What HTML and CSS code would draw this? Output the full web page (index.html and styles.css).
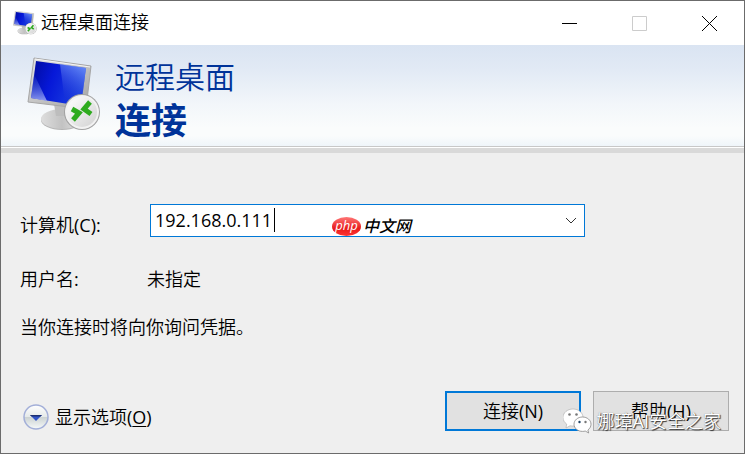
FILE: index.html
```html
<!DOCTYPE html>
<html lang="zh-CN">

<head>
  <meta charset="UTF-8">
  <meta name="viewport" content="width=device-width, initial-scale=1">
  <title>远程桌面连接</title>
  <link rel="stylesheet" href="styles.css">
</head>

<body>

  <svg width="0" height="0" class="defs" aria-hidden="true">
    <defs>
      <linearGradient id="frame" x1="0" y1="0" x2="1" y2="1">
        <stop offset="0" stop-color="#e4e4e4" />
        <stop offset="0.5" stop-color="#c4c4c4" />
        <stop offset="1" stop-color="#a0a0a0" />
      </linearGradient>
      <linearGradient id="screen" x1="0" y1="0" x2="1" y2="0.3">
        <stop offset="0" stop-color="#000a9c" />
        <stop offset="0.45" stop-color="#0618d8" />
        <stop offset="1" stop-color="#1a3fe0" />
      </linearGradient>
      <linearGradient id="shine" x1="0.6" y1="0" x2="0.3" y2="1">
        <stop offset="0" stop-color="#7fa4ff" stop-opacity="0.7" />
        <stop offset="1" stop-color="#0a1cc8" stop-opacity="0.1" />
      </linearGradient>
      <linearGradient id="glare" x1="0" y1="0" x2="0" y2="1">
        <stop offset="0" stop-color="#2a48d8" stop-opacity="0.2" />
        <stop offset="1" stop-color="#a4b0f4" stop-opacity="0.85" />
      </linearGradient>
      <linearGradient id="stand" x1="0" y1="0" x2="1" y2="0">
        <stop offset="0" stop-color="#dedede" />
        <stop offset="0.5" stop-color="#c2c2c2" />
        <stop offset="1" stop-color="#e6e6e6" />
      </linearGradient>
      <linearGradient id="badge" x1="0" y1="0" x2="1" y2="1">
        <stop offset="0" stop-color="#ffffff" />
        <stop offset="1" stop-color="#d2d2d2" />
      </linearGradient>
      <symbol id="remote" viewBox="0 0 74 74">
        <ellipse cx="35" cy="62" rx="21" ry="10" fill="#b4b4b4" />
        <ellipse cx="35" cy="61" rx="21" ry="10" fill="url(#stand)" />
        <path d="M27 46h17l-3 12H29z" fill="#bdbdbd" />
        <path d="M7 0L64 8L59 51L1 44z" fill="url(#frame)" stroke="#a6a6a6" stroke-width="1" />
        <path d="M8 1L63 9" stroke="#f4f4f4" stroke-width="1" />
        <path d="M9 3L59 10L54 48L4 40z" fill="url(#screen)" />
        <path d="M33 6L59 10L54 48L38 45z" fill="url(#shine)" />
        <path d="M7 16L20 43L4 40z" fill="url(#glare)" />
        <circle cx="55" cy="54" r="18" fill="#a2a2a2" />
        <circle cx="55" cy="54" r="17" fill="#f2f2f2" />
        <circle cx="55" cy="54" r="15" fill="url(#badge)" />
        <path d="M45 51L52 55L46 62" fill="none" stroke="#2eab1e" stroke-width="5" />
        <path d="M63 44L57 51L64 56" fill="none" stroke="#2eab1e" stroke-width="5" />
      </symbol>
    </defs>
  </svg>

  <div class="window">
    <header class="titlebar">
      <svg class="app-icon" aria-hidden="true"><use href="#remote" /></svg>
      <span class="title">远程桌面连接</span>
      <button type="button" class="caption" aria-label="最小化">
        <svg width="15" height="15" viewBox="0 0 15 15"><path d="M0 7.5h15" stroke="#000" /></svg>
      </button>
      <button type="button" class="caption" aria-label="最大化" disabled>
        <svg width="15" height="15" viewBox="0 0 15 15"><path d="M.5 .5h14v14h-14z" fill="none" stroke="#ccc" /></svg>
      </button>
      <button type="button" class="caption" aria-label="关闭">
        <svg width="15" height="15" viewBox="0 0 15 15"><path d="M0 0l15 15M15 0L0 15" stroke="#000" /></svg>
      </button>
    </header>

    <div class="banner">
      <svg class="banner-icon" aria-hidden="true"><use href="#remote" /></svg>
      <h1 class="product">远程桌面 <strong>连接</strong></h1>
    </div>

    <form class="content">
      <div class="fields">
        <label for="computer" class="computer-label">计算机<span class="key">(C):</span></label>
        <div class="combo">
          <input type="text" id="computer" name="computer" value="192.168.0.111" autocomplete="off">
          <span class="caret"></span>
          <button type="button" class="arrow" aria-label="选择计算机">
            <svg width="12" height="8" viewBox="0 0 12 8"><path d="M1 1l5 5 5-5" fill="none" stroke="#333" /></svg>
          </button>
          <div class="php-mark">
            <span class="php-oval">php</span>
            <span class="php-name">中文网</span>
          </div>
        </div>
        <span>用户名<span class="key">:</span></span>
        <span class="user">未指定</span>
      </div>

      <p class="hint">当你连接时将向你询问凭据。</p>

      <div class="actions">
        <button type="button" class="options">
          <svg width="26" height="26" viewBox="0 0 26 26" aria-hidden="true">
            <defs>
              <linearGradient id="round" x1="0" y1="0" x2="0" y2="1">
                <stop offset="0" stop-color="#ffffff" />
                <stop offset="0.48" stop-color="#e6eaea" />
                <stop offset="0.52" stop-color="#cdd3d3" />
                <stop offset="1" stop-color="#f6fafa" />
              </linearGradient>
            </defs>
            <circle cx="13" cy="13" r="12" fill="url(#round)" stroke="#a3afd8" stroke-width="1.5" />
            <path d="M7 11h12l-6 6z" fill="#3154c8" />
            <path d="M7 11h12l-1.500 1.500h-9z" fill="#1c2f70" />
          </svg>
          <span>显示选项<span class="key">(<u>O</u>)</span></span>
        </button>
        <button type="submit" class="btn primary">连接<span class="key">(N)</span></button>
        <button type="button" class="btn">帮助<span class="key">(H)</span></button>
      </div>
    </form>

    <div class="watermark">
      <svg width="30" height="26" viewBox="0 0 30 26" aria-hidden="true">
        <path d="M10 1C4.500 1 0 4.700 0 9.500c0 2.700 1.400 5 3.700 6.600L3 20l4-2.200c1 .2 2 .3 3 .3 5.500 0 10-3.800 10-8.600S15.500 1 10 1z" fill="#fff" stroke="#aaa" stroke-width=".6" />
        <path d="M19.500 9C14.800 9 11 12.200 11 16.200s3.800 7.200 8.500 7.200c1 0 1.900-.1 2.700-.4l3.500 2-.8-3c1.900-1.400 3.100-3.400 3.100-5.800 0-4-3.800-7.200-8.500-7.200z" fill="#fff" stroke="#888" stroke-width=".8" />
        <circle cx="6.500" cy="6.500" r="1.300" fill="#777" />
        <circle cx="13.500" cy="6.500" r="1.300" fill="#777" />
        <circle cx="16.500" cy="14" r="1.200" fill="#246" />
        <circle cx="22.500" cy="14" r="1.200" fill="#777" />
      </svg>
      <span>娜璋<span class="key">AI</span>安全之家</span>
    </div>
  </div>

</body>

</html>
```
FILE: styles.css
```css
* {
  box-sizing: border-box;
}

body {
  margin: 0;
  font-family: "Open Sans", "Noto Sans CJK SC", sans-serif;
  font-size: 18px;
  font-weight: 350;
  line-height: 24px;
  color: #000;
}

button,
input {
  font: inherit;
  color: inherit;
}

/* latin text next to the lighter chinese weight */
.key {
  font-weight: 400;
}

.defs {
  position: absolute;
}

.window {
  position: relative;
  display: flex;
  flex-direction: column;
  min-height: 100vh;
  background: #efefef;
  border: 1px solid #6b6b6b;
}

.titlebar {
  display: flex;
  align-items: center;
  height: 44px;
  padding-left: 12px;
  background: #fff;
}

.app-icon {
  width: 24px;
  height: 24px;
  margin-right: 4px;
}

.title {
  flex: 1;
  padding-bottom: 2px;
}

.caption {
  display: flex;
  align-items: center;
  justify-content: center;
  width: 70px;
  height: 44px;
  padding: 0;
  border: none;
  background: none;
}

.banner {
  display: flex;
  align-items: center;
  gap: 14px;
  height: 108px;
  padding: 0 26px 8px;
  background: linear-gradient(#dae4f2, #e2eaf5 25%, #f2f6fa 58%, #fafcfc 82%, #fafcfc 90%, #eff5fa) no-repeat;
  background-size: 100% 101px;
  box-shadow: inset 0 -5px #d9d9d9, inset 0 -6px #fff, inset 0 -7px #c8c8c8;
}

.banner-icon {
  width: 74px;
  height: 76px;
}

.product {
  margin: 0;
  padding-top: 8px;
  font-size: 30px;
  line-height: 44px;
  font-weight: 350;
  color: #039;
}

.product strong {
  display: block;
  font-size: 36px;
}

.content {
  display: flex;
  flex: 1;
  flex-direction: column;
  padding: 48px 15px 22px 19px;
}

.fields {
  display: grid;
  grid-template-columns: 130px 1fr;
  row-gap: 30px;
  align-items: end;
}

.computer-label {
  align-self: center;
  padding-top: 12px;
}

.combo {
  position: relative;
  display: flex;
  height: 33px;
  margin-right: 144px;
  background: #fff;
  border: 1px solid #0078d7;
}

.combo input {
  flex: 1;
  min-width: 0;
  padding: 0 4px 2px;
  border: none;
  outline: none;
  background: none;
  font-weight: 400;
}

.caret {
  position: absolute;
  top: 3px;
  left: 123px;
  width: 1px;
  height: 24px;
  background: #000;
}

.arrow {
  display: flex;
  align-items: center;
  justify-content: center;
  width: 26px;
  padding: 0;
  border: none;
  background: none;
}

.php-mark {
  position: absolute;
  top: 12px;
  left: 181px;
  display: flex;
  align-items: center;
  gap: 2px;
  height: 19px;
  pointer-events: none;
}

.php-oval {
  width: 29px;
  height: 19px;
  border-radius: 50%;
  background: linear-gradient(#f77, #e81c1c 60%, #f33);
  color: #fff;
  font-size: 13px;
  font-style: italic;
  font-weight: 500;
  line-height: 16px;
  text-align: center;
}

.php-name {
  padding-bottom: 2px;
  font-size: 16px;
  font-style: italic;
  font-weight: 500;
  white-space: nowrap;
}

.user {
  margin-left: -3px;
}

.hint {
  margin: 24px 0;
}

.actions {
  display: flex;
  align-items: center;
  gap: 12px;
  margin-top: auto;
}

.options {
  display: flex;
  align-items: center;
  gap: 6px;
  margin-right: auto;
  padding: 12px 0 0 3px;
  border: none;
  background: none;
}

.options u {
  text-underline-offset: 2px;
}

.btn {
  width: 136px;
  height: 40px;
  padding: 0;
  background: #e1e1e1;
  border: 1px solid #adadad;
}

.primary {
  border: 2px solid #0078d7;
}

.watermark {
  position: absolute;
  right: 23px;
  bottom: 19px;
  display: flex;
  align-items: center;
  gap: 4px;
  color: #fff;
  text-shadow: 1px 1px 1px #333, 0 0 1px #777;
  pointer-events: none;
}
```
